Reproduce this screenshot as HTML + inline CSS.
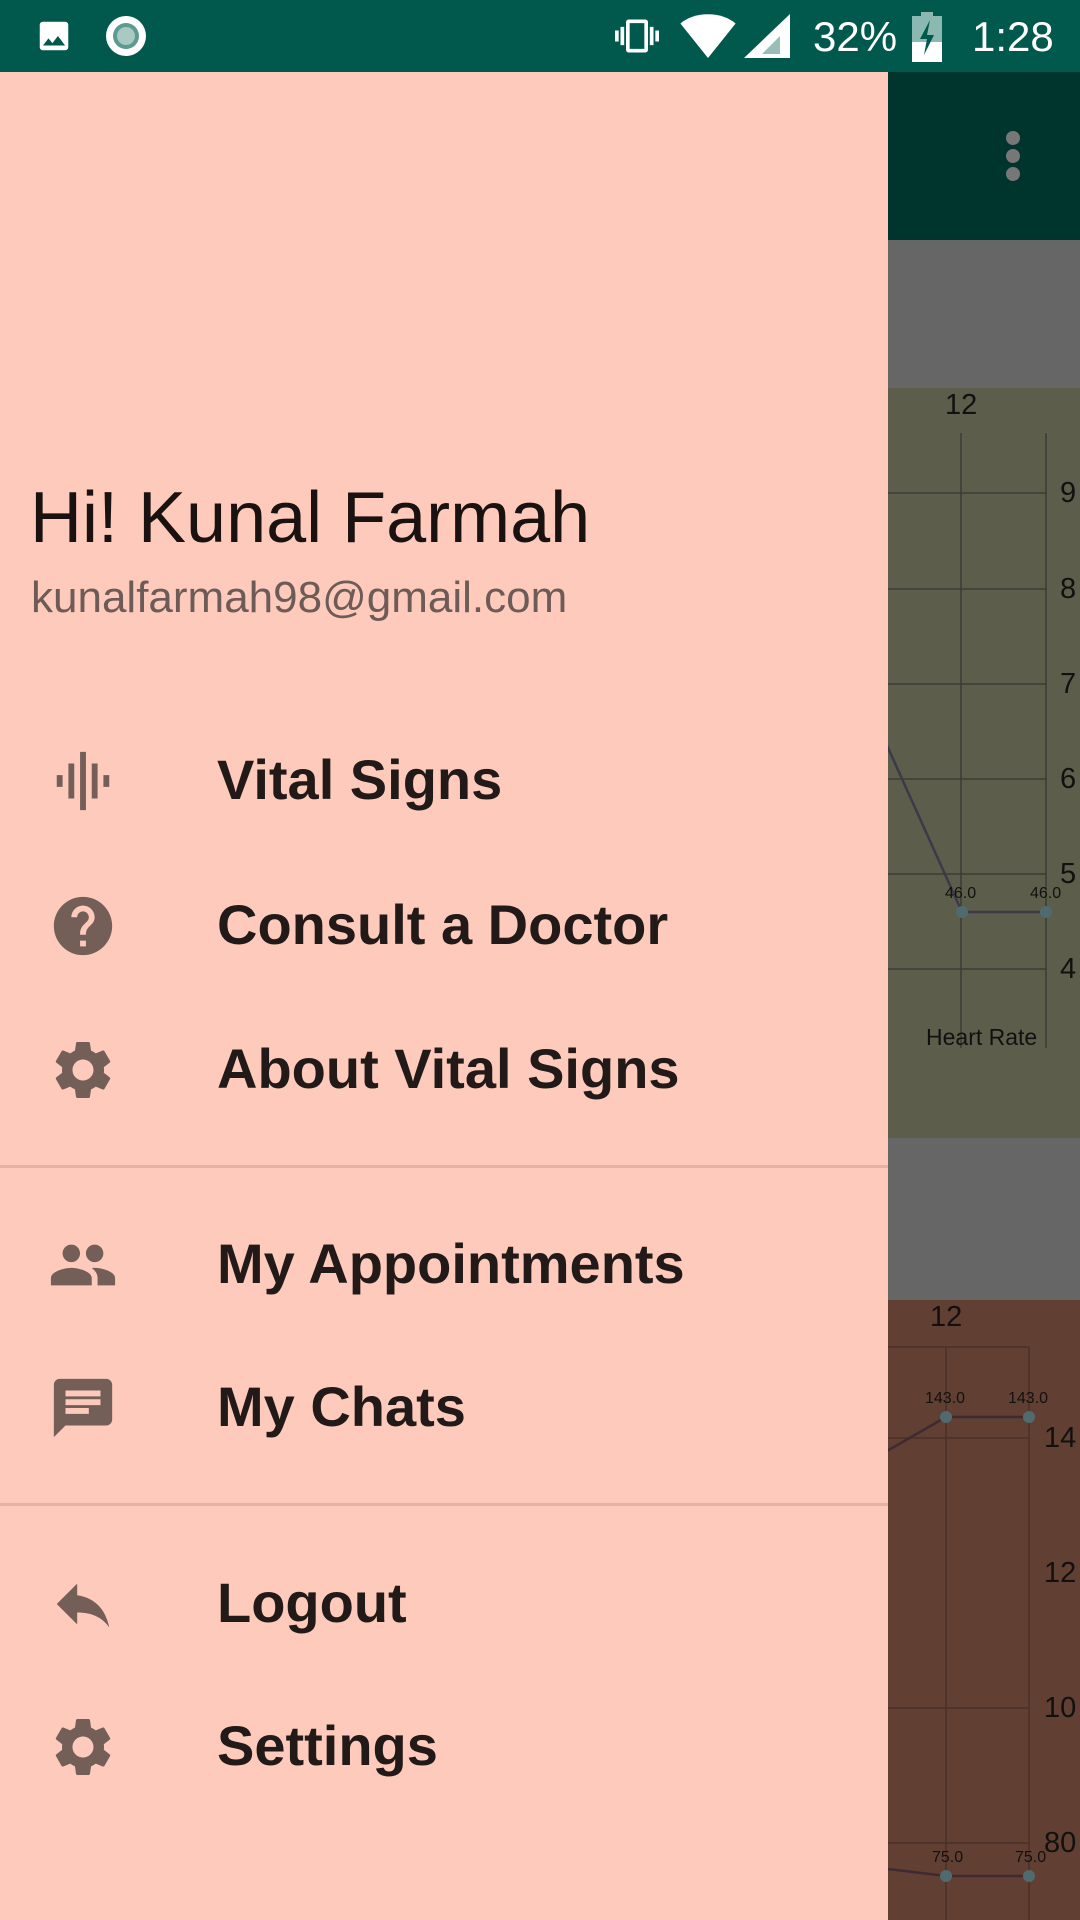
<!DOCTYPE html>
<html><head><meta charset="utf-8"><style>
*{margin:0;padding:0;box-sizing:border-box}
body{width:1080px;height:1920px;overflow:hidden;position:relative;background:#666;font-family:"Liberation Sans",sans-serif}
.sb{position:absolute;left:0;top:0;width:1080px;height:72px;background:#00594c;color:#fff}
.drawer{position:absolute;left:0;top:72px;width:888px;height:1848px;background:#fecabb}
.name{position:absolute;left:30px;top:405px;font-size:72px;color:#1a1210;white-space:nowrap}
.email{position:absolute;left:31px;top:501px;font-size:44px;color:#6d5b57;white-space:nowrap}
.item{position:absolute;left:0;width:888px;height:100px}
.item svg{position:absolute;left:48px;top:15px;width:70px;height:70px;fill:#735e58}
.item span{position:absolute;left:217px;top:50%;transform:translateY(-52%);font-size:56px;font-weight:bold;color:#221a18;white-space:nowrap}
.div{position:absolute;left:0;width:888px;height:3px;background:#e2b3a6}
</style></head><body>
<svg style="position:absolute;left:0;top:0" width="1080" height="1920">
<rect x="0" y="72" width="1080" height="168" fill="#00352e"/>
<circle cx="1013" cy="138" r="7" fill="#777"/><circle cx="1013" cy="156" r="7" fill="#777"/><circle cx="1013" cy="174" r="7" fill="#777"/>
<rect x="0" y="240" width="1080" height="148" fill="#666"/>
<rect x="0" y="388" width="1080" height="750" fill="#5c5e4b"/>
<rect x="0" y="1138" width="1080" height="162" fill="#666"/>
<rect x="0" y="1300" width="1080" height="620" fill="#623f33"/>
<g stroke="#3d3d35" stroke-width="1.5">
<line x1="961" y1="433" x2="961" y2="1048"/><line x1="1046" y1="433" x2="1046" y2="1048"/>
<line x1="880" y1="493" x2="1046" y2="493"/><line x1="880" y1="589" x2="1046" y2="589"/><line x1="880" y1="684" x2="1046" y2="684"/><line x1="880" y1="779" x2="1046" y2="779"/><line x1="880" y1="874" x2="1046" y2="874"/><line x1="880" y1="969" x2="1046" y2="969"/>
</g>
<polyline points="880,730 962,912 1046,912" fill="none" stroke="#3b3a4a" stroke-width="2.5"/>
<circle cx="962" cy="912" r="6" fill="#4f6b70"/><circle cx="1046" cy="912" r="6" fill="#4f6b70"/>
<g font-family="Liberation Sans" fill="#111">
<text x="945" y="414" font-size="29">12</text>
<text x="945" y="898" font-size="16">46.0</text><text x="1030" y="898" font-size="16">46.0</text>
<text x="926" y="1045" font-size="23">Heart Rate</text>
<text x="1060" y="502" font-size="29">9</text><text x="1060" y="598" font-size="29">8</text><text x="1060" y="693" font-size="29">7</text><text x="1060" y="788" font-size="29">6</text><text x="1060" y="883" font-size="29">5</text><text x="1060" y="978" font-size="29">4</text>
</g>
<g stroke="#4a3029" stroke-width="1.5">
<line x1="946" y1="1347" x2="946" y2="1920"/><line x1="1029" y1="1347" x2="1029" y2="1920"/>
<line x1="880" y1="1347" x2="1029" y2="1347"/><line x1="880" y1="1438" x2="1029" y2="1438"/><line x1="880" y1="1708" x2="1029" y2="1708"/><line x1="880" y1="1843" x2="1029" y2="1843"/>
</g>
<polyline points="880,1455 946,1417 1029,1417" fill="none" stroke="#3e2a32" stroke-width="2.5"/>
<polyline points="880,1868 946,1876 1029,1876" fill="none" stroke="#3e2a32" stroke-width="2.5"/>
<circle cx="946" cy="1417" r="6" fill="#4f6b70"/><circle cx="1029" cy="1417" r="6" fill="#4f6b70"/>
<circle cx="946" cy="1876" r="6" fill="#4f6b70"/><circle cx="1029" cy="1876" r="6" fill="#4f6b70"/>
<g font-family="Liberation Sans" fill="#111">
<text x="930" y="1326" font-size="29">12</text>
<text x="925" y="1403" font-size="16">143.0</text><text x="1008" y="1403" font-size="16">143.0</text>
<text x="932" y="1862" font-size="16">75.0</text><text x="1015" y="1862" font-size="16">75.0</text>
<text x="1044" y="1447" font-size="29">14</text><text x="1044" y="1582" font-size="29">12</text><text x="1044" y="1717" font-size="29">10</text><text x="1044" y="1852" font-size="29">80</text>
</g>
</svg>
<div class="sb">
<svg style="position:absolute;left:34px;top:17px" width="40" height="38" viewBox="0 0 24 24"><path fill="#fff" d="M21 19V5c0-1.1-.9-2-2-2H5c-1.1 0-2 .9-2 2v14c0 1.1.9 2 2 2h14c1.1 0 2-.9 2-2zM8.5 13.5l2.5 3 3.5-4.5 4.5 6H5l3.5-4.5z"/></svg>
<svg style="position:absolute;left:104px;top:14px" width="44" height="44"><circle cx="22" cy="22" r="20" fill="#fff"/><circle cx="22" cy="22" r="13" fill="#5d9a90"/><circle cx="22" cy="22" r="9" fill="#a9c9c3"/></svg>
<svg style="position:absolute;left:608px;top:14px" width="58" height="44" viewBox="0 0 24 24"><path fill="#fff" d="M0 15h2V9H0v6zm3 2h2V7H3v10zm19-8v6h2V9h-2zm-3 8h2V7h-2v10zM16.5 3h-9C6.67 3 6 3.670 6 4.5v15c0 .83.67 1.5 1.5 1.5h9c.83 0 1.5-.67 1.5-1.5v-15c0-.83-.67-1.5-1.5-1.5zM16 19H8V5h8v14z"/></svg>
<svg style="position:absolute;left:680px;top:12px" width="56" height="46" viewBox="0 0 24 20"><path fill="#fff" d="M12 20L0 5C3 2.5 7 1 12 1s9 1.5 12 4z"/></svg>
<svg style="position:absolute;left:744px;top:14px" width="46" height="44"><path fill="#fff" d="M46 0V44H0z"/><path fill="#00594c" d="M36 22V40H18z" opacity=".4"/></svg>
<div style="position:absolute;left:813px;top:13px;font-size:42px">32%</div>
<svg style="position:absolute;left:912px;top:12px" width="30" height="50"><rect x="9" y="0" width="12" height="5" fill="#8bb8b0"/><rect x="0" y="4" width="30" height="46" fill="#8bb8b0"/><rect x="0" y="30" width="30" height="20" fill="#fff"/><path d="M18 8L8 27h7l-3 16 10-20h-7z" fill="#00594c"/></svg>
<div style="position:absolute;left:972px;top:13px;font-size:42px">1:28</div>
</div>
<div class="drawer">
<div class="name">Hi! Kunal Farmah</div>
<div class="email">kunalfarmah98@gmail.com</div>
</div>
<div class="item" style="top:731px"><svg viewBox="0 0 24 24"><path d="M7 18h2V6H7v12zm4 4h2V2h-2v20zm-8-8h2v-4H3v4zm12 4h2V6h-2v12zm4-8v4h2v-4h-2z"/></svg><span>Vital Signs</span></div>
<div class="item" style="top:876px"><svg viewBox="0 0 24 24"><path d="M12 2C6.48 2 2 6.48 2 12s4.48 10 10 10 10-4.480 10-10S17.52 2 12 2zm1 17h-2v-2h2v2zm2.07-7.75l-.9.92C13.45 12.9 13 13.5 13 15h-2v-.5c0-1.1.45-2.1 1.17-2.83l1.24-1.26c.37-.36.59-.86.59-1.41 0-1.1-.9-2-2-2s-2 .9-2 2H8c0-2.21 1.79-4 4-4s4 1.79 4 4c0 .88-.36 1.680-.93 2.25z"/></svg><span>Consult a Doctor</span></div>
<div class="item" style="top:1020px"><svg viewBox="0 0 24 24"><path d="M19.14 12.94c.04-.3.06-.61.06-.94 0-.32-.02-.64-.07-.94l2.030-1.58c.18-.14.23-.41.12-.61l-1.92-3.32c-.12-.22-.37-.29-.59-.22l-2.39.96c-.5-.38-1.03-.7-1.62-.94l-.36-2.54c-.04-.24-.24-.41-.48-.41h-3.84c-.24 0-.43.17-.47.41l-.36 2.54c-.59.24-1.13.57-1.62.94l-2.39-.96c-.22-.08-.47 0-.59.22L2.74 8.87c-.12.21-.08.47.12.61l2.03 1.58c-.05.3-.09.63-.09.94s.02.64.07.94l-2.03 1.58c-.18.14-.23.41-.12.61l1.92 3.32c.12.22.37.29.59.22l2.39-.96c.5.38 1.03.7 1.62.94l.36 2.54c.05.24.24.41.48.41h3.84c.24 0 .44-.17.47-.41l.36-2.54c.59-.24 1.13-.56 1.62-.94l2.39.96c.22.08.47 0 .59-.22l1.92-3.32c.12-.22.07-.47-.12-.61l-2.01-1.58zM12 15.6c-1.98 0-3.6-1.62-3.6-3.6s1.62-3.6 3.6-3.6 3.6 1.62 3.6 3.6-1.62 3.6-3.6 3.6z"/></svg><span>About Vital Signs</span></div>
<div class="div" style="top:1165px"></div>
<div class="item" style="top:1215px"><svg viewBox="0 0 24 24" preserveAspectRatio="none"><path d="M16 11c1.66 0 2.99-1.34 2.99-3S17.66 5 16 5c-1.66 0-3 1.34-3 3s1.34 3 3 3zm-8 0c1.66 0 2.99-1.34 2.99-3S9.66 5 8 5C6.34 5 5 6.34 5 8s1.34 3 3 3zm0 2c-2.33 0-7 1.17-7 3.5V19h14v-2.5c0-2.33-4.67-3.5-7-3.5zm8 0c-.29 0-.62.02-.97.05 1.16.84 1.97 1.97 1.97 3.45V19h6v-2.5c0-2.33-4.67-3.5-7-3.5z"/></svg><span>My Appointments</span></div>
<div class="item" style="top:1358px"><svg viewBox="0 0 24 24"><path d="M20 2H4c-1.1 0-1.99.9-1.99 2L2 22l4-4h14c1.1 0 2-.9 2-2V4c0-1.1-.9-2-2-2zM6 9h12v2H6V9zm8 5H6v-2h8v2zm4-6H6V6h12v2z"/></svg><span>My Chats</span></div>
<div class="div" style="top:1503px"></div>
<div class="item" style="top:1554px"><svg viewBox="0 0 24 24"><path d="M10 9V5l-7 7 7 7v-4.1c5 0 8.5 1.6 11 5.1-1-5-4-10-11-11z"/></svg><span>Logout</span></div>
<div class="item" style="top:1697px"><svg viewBox="0 0 24 24"><path d="M19.14 12.94c.04-.3.06-.61.06-.94 0-.32-.02-.64-.07-.94l2.030-1.58c.18-.14.23-.41.12-.61l-1.92-3.32c-.12-.22-.37-.29-.59-.22l-2.39.96c-.5-.38-1.03-.7-1.62-.94l-.36-2.54c-.04-.24-.24-.41-.48-.41h-3.84c-.24 0-.43.17-.47.41l-.36 2.54c-.59.24-1.13.57-1.62.94l-2.39-.96c-.22-.08-.47 0-.59.22L2.74 8.87c-.12.21-.08.47.12.61l2.03 1.58c-.05.3-.09.63-.09.94s.02.64.07.94l-2.03 1.58c-.18.14-.23.41-.12.61l1.92 3.32c.12.22.37.29.59.22l2.39-.96c.5.38 1.03.7 1.62.94l.36 2.54c.05.24.24.41.48.41h3.84c.24 0 .44-.17.47-.41l.36-2.54c.59-.24 1.13-.56 1.62-.94l2.39.96c.22.08.47 0 .59-.22l1.92-3.32c.12-.22.07-.47-.12-.61l-2.01-1.58zM12 15.6c-1.98 0-3.6-1.62-3.6-3.6s1.62-3.6 3.6-3.6 3.6 1.62 3.6 3.6-1.62 3.6-3.6 3.6z"/></svg><span>Settings</span></div>
</body></html>
